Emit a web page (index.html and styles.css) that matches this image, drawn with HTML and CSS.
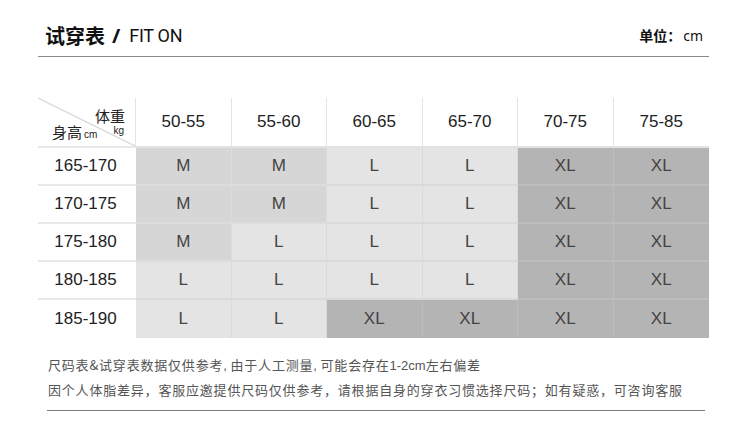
FILE: index.html
```html
<!DOCTYPE html>
<html lang="zh-CN">
<head>
<meta charset="utf-8">
<title>试穿表 / FIT ON</title>
<link rel="stylesheet" href="styles.css">
</head>
<body>
<div class="page">
  <header class="head">
    <h1 class="title"><span class="title-zh">试穿表</span><span class="slash">/</span><span class="title-en">FIT ON</span></h1>
    <div class="unit"><span class="unit-zh">单位：</span>cm</div>
  </header>

  <div class="chart">
    <div class="corner">
      <svg class="diag" viewBox="0 0 100 50" preserveAspectRatio="none"><line x1="0" y1="0" x2="100" y2="50"/></svg>
      <div class="weight"><span class="w-zh">体重</span><span class="w-unit">kg</span></div>
      <div class="height"><span class="h-zh">身高</span><span class="h-unit">cm</span></div>
    </div>
    <div class="th">50-55</div>
    <div class="th">55-60</div>
    <div class="th">60-65</div>
    <div class="th">65-70</div>
    <div class="th">70-75</div>
    <div class="th last">75-85</div>

    <div class="rh">165-170</div>
    <div class="c m">M</div><div class="c m">M</div><div class="c l">L</div><div class="c l">L</div><div class="c xl">XL</div><div class="c xl last">XL</div>

    <div class="rh">170-175</div>
    <div class="c m">M</div><div class="c m">M</div><div class="c l">L</div><div class="c l">L</div><div class="c xl">XL</div><div class="c xl last">XL</div>

    <div class="rh">175-180</div>
    <div class="c m">M</div><div class="c l">L</div><div class="c l">L</div><div class="c l">L</div><div class="c xl">XL</div><div class="c xl last">XL</div>

    <div class="rh">180-185</div>
    <div class="c l">L</div><div class="c l">L</div><div class="c l">L</div><div class="c l">L</div><div class="c xl">XL</div><div class="c xl last">XL</div>

    <div class="rh bottom">185-190</div>
    <div class="c l bottom">L</div><div class="c l bottom">L</div><div class="c xl bottom">XL</div><div class="c xl bottom">XL</div><div class="c xl bottom">XL</div><div class="c xl bottom last">XL</div>
  </div>

  <div class="notes">
    <p>尺码表&amp;试穿表数据仅供参考<span class="latin">, </span>由于人工测量<span class="latin">, </span>可能会存在<span class="latin">1-2cm</span>左右偏差</p>
    <p>因个人体脂差异，客服应邀提供尺码仅供参考，请根据自身的穿衣习惯选择尺码；如有疑惑，可咨询客服</p>
  </div>
</div>
</body>
</html>
```

FILE: styles.css
```css
* { box-sizing: border-box; }

html, body {
  margin: 0;
  padding: 0;
  background: #ffffff;
}

body {
  width: 750px;
  height: 425px;
  overflow: hidden;
  font-family: "Liberation Sans", "Noto Sans CJK SC", sans-serif;
  color: #222;
}

.page {
  padding-left: 38px;
  width: 709px;
}

/* ---------- header ---------- */
.head {
  height: 57px;
  border-bottom: 1px solid #8a8a8a;
  display: flex;
  align-items: flex-start;
  justify-content: space-between;
  padding: 22px 6px 0 7px;
}

.title {
  margin: 0;
  display: flex;
  align-items: center;
  height: 26px;
  font-weight: normal;
  color: #111;
}

.title-zh {
  font-family: "Noto Sans CJK SC", sans-serif;
  font-weight: 700;
  font-size: 20px;
}

.slash {
  font-family: "Noto Sans", "Liberation Sans", sans-serif;
  font-weight: 700;
  font-size: 20px;
  margin: 0 9px 0 7px;
}

.title-en {
  font-family: Roboto, "Liberation Sans", sans-serif;
  font-size: 18px;
  letter-spacing: -0.3px;
}

.unit {
  height: 26px;
  display: flex;
  align-items: center;
  font-family: "Noto Sans", "Noto Sans CJK SC", sans-serif;
  font-size: 14px;
  color: #111;
}

.unit-zh {
  font-family: "Noto Sans CJK SC", sans-serif;
  font-weight: 700;
  margin-right: 2px;
}

/* ---------- chart ---------- */
.chart {
  margin-top: 41px;
  display: grid;
  grid-template-columns: 98px repeat(6, 95.5px);
  grid-template-rows: 50px repeat(5, 38px);
}

.corner {
  position: relative;
  border-bottom: 2px solid #e8e8e8;
  border-right: 1px solid #e4e4e4;
  display: grid;
  grid-template-columns: 1fr;
  grid-template-rows: 1fr;
  padding: 10px 10px 4px 14px;
  font-family: "Noto Sans CJK SC", sans-serif;
  color: #222;
}

.diag {
  position: absolute;
  left: 0;
  top: 0;
  width: 100%;
  height: 100%;
}

.diag line {
  stroke: #d8d8d8;
  stroke-width: 1.2;
  vector-effect: non-scaling-stroke;
}

.weight {
  grid-area: 1 / 1;
  align-self: start;
  justify-self: end;
  position: relative;
  display: flex;
  flex-direction: column;
  align-items: flex-end;
}

.w-zh {
  font-size: 15px;
  line-height: 15px;
}

.w-unit {
  font-family: "Liberation Sans", sans-serif;
  font-size: 10px;
  line-height: 10px;
  margin-top: 3px;
  margin-right: 1px;
}

.height {
  grid-area: 1 / 1;
  align-self: end;
  justify-self: start;
  position: relative;
  display: flex;
  align-items: baseline;
  line-height: 15px;
}

.h-zh {
  font-size: 15px;
}

.h-unit {
  font-family: "Liberation Sans", sans-serif;
  font-size: 10px;
  margin-left: 2px;
}

.th {
  display: flex;
  align-items: center;
  justify-content: center;
  font-size: 17px;
  color: #222;
  border-right: 1px solid #e4e4e4;
  border-bottom: 2px solid #e2e2e2;
}

.rh {
  display: flex;
  align-items: center;
  justify-content: center;
  padding-right: 3px;
  font-size: 17px;
  color: #222;
  border-bottom: 2px solid #e8e8e8;
}

.c {
  display: flex;
  align-items: center;
  justify-content: center;
  font-size: 17px;
  color: #444;
  border-right: 1px solid;
  border-bottom: 2px solid;
}

.m {
  background: #d6d6d6;
  border-color: #dcdcdc;
}

.l {
  background: #e4e4e4;
  border-color: #dadada;
}

.xl {
  background: #b4b4b4;
  border-color: #bdbdbd;
}

.last { border-right: none; }
.bottom { border-bottom: none; }

/* ---------- notes ---------- */
.notes {
  margin-left: 9px;
  width: 658px;
  padding: 15px 0 8px 1px;
  border-bottom: 1px solid #7a7a7a;
  font-family: "Noto Sans CJK SC", sans-serif;
  font-size: 13px;
  color: #555;
  letter-spacing: 0.8px;
}

.notes p {
  margin: 0;
  line-height: 24px;
  white-space: nowrap;
}

.latin {
  font-family: "Liberation Sans", sans-serif;
  letter-spacing: 0;
}
```
